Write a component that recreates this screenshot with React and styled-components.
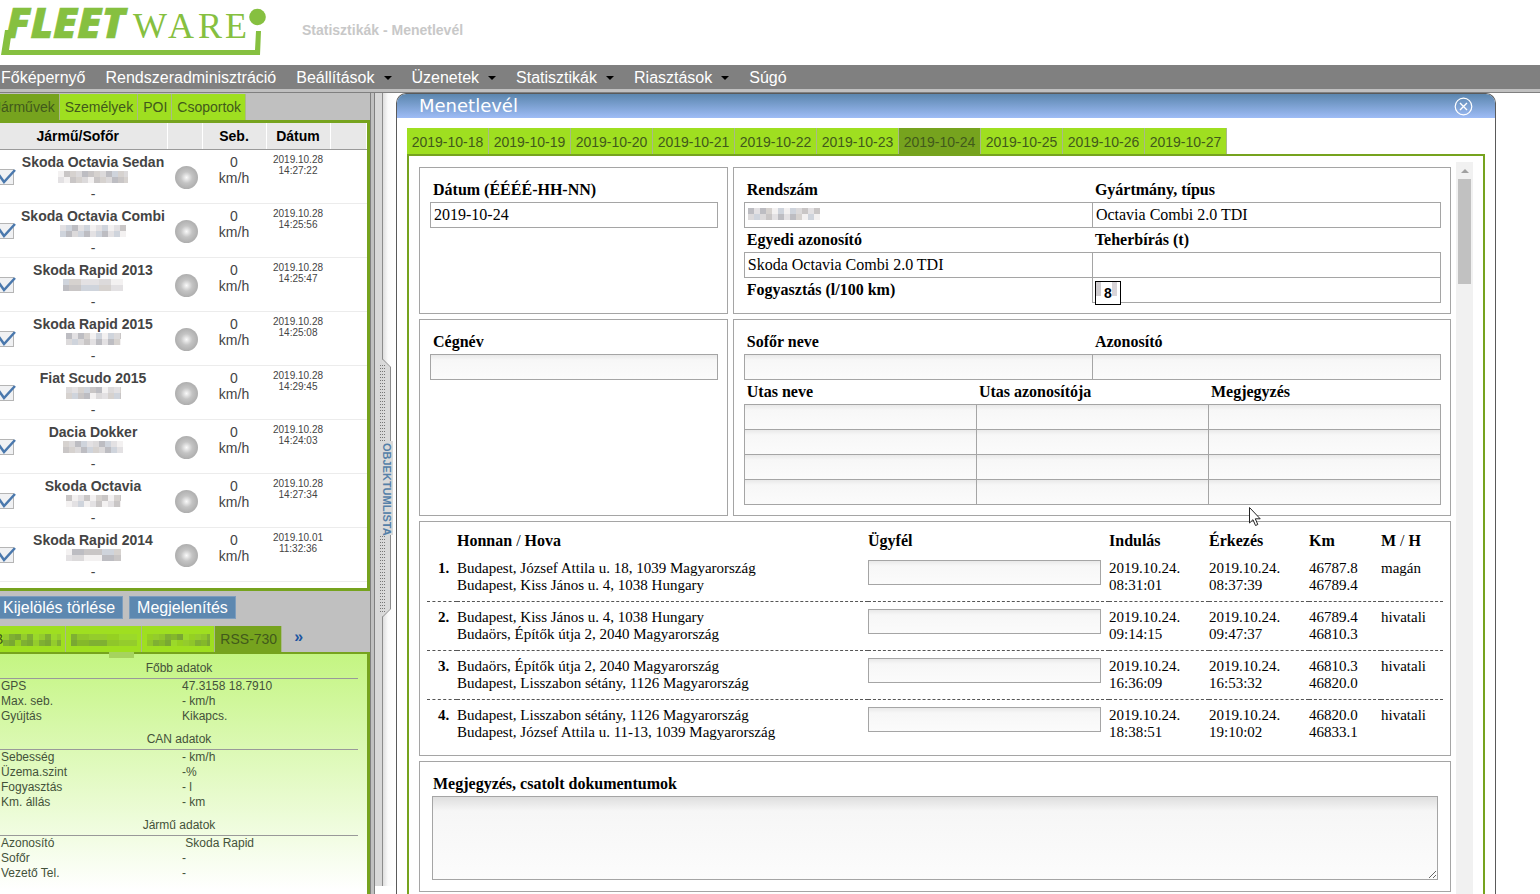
import { Fragment } from "react";
import styled, { createGlobalStyle, css } from "styled-components";

const GlobalStyle = createGlobalStyle`
  * {
    box-sizing: border-box;
  }

  body {
    margin: 0;
    background: #fff;
    font-family: "Liberation Sans", Arial, sans-serif;
  }

  button,
  input,
  textarea {
    font: inherit;
    margin: 0;
  }
`;

const GREEN = "#76a31e";
const LIME = "#9fdf20";
const LINE = "#a5a5a5";

const Page = styled.div`
  display: flex;
  flex-direction: column;
  height: 100vh;
  overflow: hidden;
`;

const Header = styled.header`
  display: flex;
  align-items: center;
  flex: none;
  height: 65px;
  gap: 34px;

  svg {
    align-self: flex-start;
  }
`;

const Breadcrumb = styled.div`
  color: #c8c8c8;
  font-size: 14px;
  font-weight: bold;
  padding-bottom: 6px;
`;

const MenuBar = styled.nav`
  display: flex;
  align-items: center;
  flex: none;
  gap: 20px;
  height: 24px;
  padding: 1px 0 0 1px;
  background: #808080;
`;

const MenuLink = styled.a`
  display: flex;
  align-items: center;
  gap: 9px;
  color: #fff;
  font-size: 16px;
  line-height: 23px;
  text-decoration: none;
`;

const Caret = styled.span`
  border: 4px solid transparent;
  border-top-color: #000;
  border-bottom: 0;
`;

const Strip = styled.div`
  flex: none;
  height: 4px;
  background: #c0c0c0;
  border-bottom: 1px solid #808080;
`;

const Body = styled.div`
  display: flex;
  flex: 1;
  min-height: 0;
`;

/* the panel is slid a little under the left edge */
const Side = styled.aside`
  display: flex;
  flex-direction: column;
  flex: none;
  width: 382px;
  margin-left: -11px;
  background: #c0c0c0;
  border-right: 1px solid #808080;
`;

const Tabs = styled.div`
  display: flex;
  flex: none;
  margin-top: ${(p) => p.$top || 0}px;
`;

const Tab = styled.button`
  height: 26px;
  padding: 0 4px 0 5px;
  border: 0;
  border-right: 1px solid #a9b98a;
  background: ${(p) => (p.$active ? GREEN : LIME)};
  color: #41591b;
  font-size: 14px;
  line-height: 26px;
  white-space: nowrap;

  svg {
    vertical-align: middle;
  }
`;

const DayTab = styled(Tab)`
  width: 82px;
  padding: 0;
  line-height: 28px;
`;

const MoreTabs = styled.button`
  border: 0;
  padding: 0 0 4px 12px;
  background: none;
  color: #1c55a0;
  font-size: 16px;
  font-weight: bold;
  line-height: 20px;
`;

const ListBox = styled.div`
  flex: none;
  height: 471px;
  overflow: hidden;
  background: #fff;
  border: 3px solid ${GREEN};
  border-left: 0;
`;

const VehicleTable = styled.table`
  width: 100%;
  table-layout: fixed;
  border-collapse: collapse;
  color: #444;
  font-size: 14px;
  line-height: 16px;
  text-align: center;

  th {
    height: 26px;
    padding: 0;
    background: #e8e8e8;
    border-right: 1px solid #fff;
    border-bottom: 1px solid #9a9a9a;
    color: #000;
  }

  td {
    height: 54px;
    padding: 4px 0 0;
    vertical-align: top;
    border-bottom: 1px solid #ececec;
  }
`;

const VehicleName = styled.div`
  font-weight: bold;
  white-space: nowrap;
`;

const Stamp = styled.td`
  font-size: 10px;
  line-height: 11px;
`;

const CheckLabel = styled.label`
  position: relative;
  display: block;
  width: 18px;
  height: 18px;
  margin: 14px 0 0 7px;

  input {
    appearance: none;
    width: 17px;
    height: 16px;
    margin: 1px 0 0;
    border: 1px solid #b5b5b5;
    background: #f0f1f3;
  }

  svg {
    position: absolute;
    left: 0;
    top: 0;
  }
`;

const Lamp = styled.span`
  display: block;
  width: 23px;
  height: 23px;
  margin: 12px 4px 0 auto;
  border-radius: 50%;
  background: radial-gradient(circle, #fafafa 0%, #c4c4c4 35%, #9c9c9c 100%);
`;

const Actions = styled.div`
  display: flex;
  flex: none;
  gap: 6px;
  padding: 5px 0 7px 6px;
`;

const ActionButton = styled.button`
  height: 23px;
  padding: 0 7px;
  border: 1px solid #7d9dbd;
  background: #5d88b0;
  color: #fff;
  font-size: 16px;
  line-height: 20px;
`;

const Details = styled.div`
  position: relative;
  flex: 1;
  padding: 0 9px 0 11px;
  background: linear-gradient(#c4f582, #fff 236px);
  border-top: 2px solid ${GREEN};
  border-right: 3px solid ${GREEN};
`;

const Smudge = styled.span`
  position: absolute;
  left: 120px;
  top: -2px;
  width: 25px;
  height: 6px;
  background: #a6d35e;
`;

const DetailTable = styled.table`
  width: 100%;
  border-collapse: collapse;
  color: #44523a;
  font-size: 12px;
  line-height: 15px;

  & + & {
    margin-top: 1px;
  }

  caption {
    padding: 7px 0 2px;
    border-bottom: 1px solid #999;
  }

  th {
    width: 182px;
    padding: 0 0 0 1px;
    font-weight: normal;
    text-align: left;
  }

  td {
    padding: 0;
    white-space: pre;
  }
`;

const Splitter = styled.div`
  position: relative;
  flex: none;
  width: 25px;
  background: linear-gradient(
    to right,
    #c0c0c0 3px,
    #808080 3px 4px,
    #d8d8d8 4px 11px,
    #8c8c8c 11px 12px,
    #dedede 12px,
    #fafafa 17px,
    #fff
  );

  &::after {
    content: "";
    position: absolute;
    left: 4px;
    right: 0;
    bottom: 0;
    height: 8px;
    background: #fff;
  }
`;

const SplitHandle = styled.button`
  position: absolute;
  left: 5px;
  top: 266px;
  width: 18px;
  height: 260px;
  padding: 0;
  border: 0;
  background: none;

  svg {
    position: absolute;
    left: 0;
    top: 0;
  }
`;

const SplitText = styled.span`
  position: absolute;
  left: 5px;
  top: 84px;
  color: #5580a8;
  font-size: 11px;
  font-weight: bold;
  line-height: 11px;
  writing-mode: vertical-rl;
`;

const Win = styled.main`
  display: flex;
  flex-direction: column;
  flex: 1;
  min-width: 0;
  margin-right: 44px;
  border: 1px solid #5a5a5a;
  border-bottom: 0;
  border-radius: 10px 10px 0 0;
  overflow: hidden;
`;

const WinTitle = styled.div`
  display: flex;
  align-items: center;
  justify-content: space-between;
  flex: none;
  height: 24px;
  padding: 0 22px;
  background: linear-gradient(#5b86ae, #9ebcf6);

  h1 {
    margin: 0;
    color: #fff;
    font-family: "DejaVu Sans", Verdana, sans-serif;
    font-size: 18px;
    font-weight: normal;
    line-height: 24px;
  }

  button {
    display: flex;
    padding: 0;
    border: 0;
    background: none;
  }
`;

const WinBody = styled.div`
  display: flex;
  flex-direction: column;
  flex: 1;
  min-height: 0;
  padding: 10px 10px 0;
`;

const Sheet = styled.div`
  display: flex;
  flex: 1;
  min-height: 0;
  gap: 5px;
  padding: 6px 10px 0;
  border: 2px solid ${GREEN};
  border-bottom: 0;
`;

const Form = styled.form`
  display: grid;
  grid-template-columns: 43fr 100fr;
  grid-auto-rows: max-content;
  flex: 1;
  gap: 5px;
  min-width: 0;
  padding-top: 5px;
  font-family: "Liberation Serif", "Times New Roman", serif;
  font-size: 16px;
`;

const Card = styled.section`
  grid-column: ${(p) => (p.$wide ? "1 / -1" : "auto")};
  padding: ${(p) => (p.$flush ? "7px" : "9px 10px 11px")};
  border: 1px solid ${LINE};
`;

const Fields = styled.div`
  display: grid;
  grid-template-columns: repeat(${(p) => p.$cols}, 1fr);
  grid-auto-rows: 25px;
`;

const FieldLabel = styled.label`
  display: block;
  padding-left: 3px;
  font-weight: bold;
  line-height: 25px;
`;

const boxLook = css`
  border: 1px solid ${LINE};
  border-radius: 0;
  outline: 0;
  background: ${(p) =>
    p.readOnly ? "#fff" : "linear-gradient(#e9e9e9, #f7f7f7 5px, #fbfbfb)"};
`;

/* one pixel larger than its cell, so that neighbours share a border */
const Field = styled.input`
  ${boxLook}
  width: calc(100% + 1px);
  height: 26px;
  padding: 0 3px;
`;

const FieldWrap = styled.div`
  position: relative;
`;

const FieldMosaic = styled.span`
  position: absolute;
  left: 4px;
  top: 6px;
  line-height: 0;
`;

const Usage = styled.b`
  position: absolute;
  left: 3px;
  top: 4px;
  width: 26px;
  height: 24px;
  padding-left: 8px;
  border: 1px solid #000;
  background: linear-gradient(to right, #d0cdd0 5px, #fff 5px 16px, #d8d4d8 16px 21px, #fff 21px);
  background-size: 100% 14px;
  background-repeat: no-repeat;
  background-color: #fff;
  font-family: "Liberation Sans", Arial, sans-serif;
  font-size: 14px;
  line-height: 22px;
`;

const Trips = styled.table`
  width: 100%;
  table-layout: fixed;
  border-collapse: collapse;
  font-size: 15px;
  line-height: 17px;
  text-align: left;

  thead th {
    height: 23px;
    padding: 0;
    font-size: 16px;
  }

  tbody th,
  td {
    height: 49px;
    padding: 8px 0 6px;
    vertical-align: top;
  }

  tbody th {
    padding-left: 11px;
  }

  tbody tr + tr {
    border-top: 1px dashed #555;
  }

  tbody tr + tr > * {
    padding-top: 7px;
  }
`;

const Slash = styled.span`
  font-weight: normal;
`;

const ClientField = styled.input`
  ${boxLook}
  display: block;
  width: 233px;
  height: 25px;
`;

const Notes = styled.textarea`
  ${boxLook}
  display: block;
  width: calc(100% - 4px);
  height: 84px;
  margin: 0 2px;
  background: linear-gradient(#dedede, #f6f6f6 14px, #fcfcfc);
  resize: vertical;
`;

const ScrollTrack = styled.div`
  flex: none;
  width: 17px;
  padding: 0 2px;
  background: #f1f1f1;
`;

const ScrollArrow = styled.div`
  display: flex;
  align-items: center;
  justify-content: center;
  height: 17px;

  &::before {
    content: "";
    border: 4px solid transparent;
    border-top: 0;
    border-bottom-color: #a0a0a0;
  }
`;

const ScrollThumb = styled.div`
  height: 105px;
  background: #c1c1c1;
`;

const Pointer = styled.svg`
  position: absolute;
  left: 1249px;
  top: 507px;
  pointer-events: none;
`;

const GREYS = ["#c9c6c6", "#e3e1e3", "#bdbdc2", "#d6d2cf", "#f3f1f1", "#cfd4dc", "#dcdadb"];
const GREENS = ["#84b82a", "#94cc2c", "#79a832", "#8fc62a", "#9bd92a", "#7fb032", "#95d022"];

function Mosaic({ width = 60, seed = 1, green }) {
  const shades = green ? GREENS : GREYS;
  const cells = [];
  for (let x = 0; x < width; x += 6) {
    for (let y = 0; y < 12; y += 6) {
      const n = (x * 5 + y * 3 + seed * 11 + ((x * seed) % 5)) % shades.length;
      cells.push(<rect key={`${x}-${y}`} x={x} y={y} width="6" height="6" fill={shades[n]} />);
    }
  }
  return (
    <svg width={width} height="12" aria-hidden="true">
      {cells}
    </svg>
  );
}

function Logo() {
  return (
    <svg width="268" height="60" role="img" aria-label="Fleetware" fill="#86c040">
      <text
        x="6"
        y="38"
        fontFamily="Open Sans, sans-serif"
        fontSize="43"
        fontWeight="800"
        fontStyle="italic"
        stroke="#86c040"
        strokeWidth="0.600"
      >
        FLEET
      </text>
      <text x="133 168 198 225" y="38" fontFamily="Liberation Serif, serif" fontSize="36">
        WARE
      </text>
      <path d="M5 30 L1 55 H260 L261 31 H256 L255 50 H9 L12 30 Z" />
      <circle cx="257.500" cy="17" r="8.300" />
    </svg>
  );
}

const menu = [
  ["Főképernyő"],
  ["Rendszeradminisztráció"],
  ["Beállítások", true],
  ["Üzenetek", true],
  ["Statisztikák", true],
  ["Riasztások", true],
  ["Súgó"],
];

const vehicles = [
  ["Skoda Octavia Sedan", "2019.10.28", "14:27:22", 70],
  ["Skoda Octavia Combi", "2019.10.28", "14:25:56", 66],
  ["Skoda Rapid 2013", "2019.10.28", "14:25:47", 60],
  ["Skoda Rapid 2015", "2019.10.28", "14:25:08", 55],
  ["Fiat Scudo 2015", "2019.10.28", "14:29:45", 55],
  ["Dacia Dokker", "2019.10.28", "14:24:03", 60],
  ["Skoda Octavia", "2019.10.28", "14:27:34", 55],
  ["Skoda Rapid 2014", "2019.10.01", "11:32:36", 55],
];

const details = [
  ["Főbb adatok", [["GPS", "47.3158 18.7910"], ["Max. seb.", "- km/h"], ["Gyújtás", "Kikapcs."]]],
  ["CAN adatok", [["Sebesség", "- km/h"], ["Üzema.szint", "-%"], ["Fogyasztás", "- l"], ["Km. állás", "- km"]]],
  ["Jármű adatok", [["Azonosító", " Skoda Rapid"], ["Sofőr", "-"], ["Vezető Tel.", "-"]]],
];

const days = [18, 19, 20, 21, 22, 23, 24, 25, 26, 27];

const trips = [
  {
    from: "Budapest, József Attila u. 18, 1039 Magyarország",
    to: "Budapest, Kiss János u. 4, 1038 Hungary",
    start: "08:31:01",
    end: "08:37:39",
    km: ["46787.8", "46789.4"],
    kind: "magán",
  },
  {
    from: "Budapest, Kiss János u. 4, 1038 Hungary",
    to: "Budaörs, Építők útja 2, 2040 Magyarország",
    start: "09:14:15",
    end: "09:47:37",
    km: ["46789.4", "46810.3"],
    kind: "hivatali",
  },
  {
    from: "Budaörs, Építők útja 2, 2040 Magyarország",
    to: "Budapest, Lisszabon sétány, 1126 Magyarország",
    start: "16:36:09",
    end: "16:53:32",
    km: ["46810.3", "46820.0"],
    kind: "hivatali",
  },
  {
    from: "Budapest, Lisszabon sétány, 1126 Magyarország",
    to: "Budapest, József Attila u. 11-13, 1039 Magyarország",
    start: "18:38:51",
    end: "19:10:02",
    km: ["46820.0", "46833.1"],
    kind: "hivatali",
  },
];

function VehicleList() {
  return (
    <ListBox>
      <VehicleTable>
        <colgroup>
          <col width="30" />
          <col width="148" />
          <col width="35" />
          <col width="64" />
          <col width="64" />
          <col />
        </colgroup>
        <thead>
          <tr>
            <th colSpan={2}>Jármű/Sofőr</th>
            <th />
            <th>Seb.</th>
            <th>Dátum</th>
            <th />
          </tr>
        </thead>
        <tbody>
          {vehicles.map(([name, date, time, width], i) => (
            <tr key={name}>
              <td>
                <CheckLabel>
                  <input type="checkbox" defaultChecked aria-label={name} />
                  <svg width="22" height="18" viewBox="0 0 22 18">
                    <path d="M3 7 L8 14 L19 2" fill="none" stroke="#4a78ad" strokeWidth="2.500" />
                  </svg>
                </CheckLabel>
              </td>
              <td>
                <VehicleName>{name}</VehicleName>
                <Mosaic width={width} seed={i + 1} />
                <div>-</div>
              </td>
              <td>
                <Lamp />
              </td>
              <td>
                0<br />
                km/h
              </td>
              <Stamp>
                {date}
                <br />
                {time}
              </Stamp>
              <td />
            </tr>
          ))}
        </tbody>
      </VehicleTable>
    </ListBox>
  );
}

function Sidebar() {
  return (
    <Side>
      <Tabs $top={1}>
        <Tab $active>Járművek</Tab>
        <Tab>Személyek</Tab>
        <Tab>POI</Tab>
        <Tab>Csoportok</Tab>
      </Tabs>
      <VehicleList />
      <Actions>
        <ActionButton>Kijelölés törlése</ActionButton>
        <ActionButton>Megjelenítés</ActionButton>
      </Actions>
      <Tabs>
        <Tab>
          B<Mosaic width={58} seed={2} green />
        </Tab>
        <Tab aria-label="2">
          <Mosaic width={66} seed={3} green />
        </Tab>
        <Tab aria-label="3">
          <Mosaic width={63} seed={5} green />
        </Tab>
        <Tab $active>RSS-730</Tab>
        <MoreTabs>»</MoreTabs>
      </Tabs>
      <Details>
        <Smudge />
        {details.map(([title, rows]) => (
          <DetailTable key={title}>
            <caption>{title}</caption>
            <tbody>
              {rows.map(([label, value]) => (
                <tr key={label}>
                  <th scope="row">{label}</th>
                  <td>{value}</td>
                </tr>
              ))}
            </tbody>
          </DetailTable>
        ))}
      </Details>
    </Side>
  );
}

function SplitBar() {
  return (
    <Splitter>
      <SplitHandle>
        <svg width="18" height="260">
          <defs>
            <pattern id="dots" width="2" height="3" patternUnits="userSpaceOnUse">
              <rect width="1" height="1" fill="#777" />
            </pattern>
          </defs>
          <path d="M6 0 L14 8 V250 L6 258 Z" fill="#dadada" />
          <path d="M6.500 0 L14.500 8 V250 L6.500 258" fill="none" stroke="#8c8c8c" />
          <rect x="4" y="6" width="6" height="76" fill="url(#dots)" />
          <rect x="4" y="177" width="6" height="76" fill="url(#dots)" />
          <rect x="5" y="82" width="12" height="94" fill="#dadada" />
        </svg>
        <SplitText>OBJEKTUMLISTA</SplitText>
      </SplitHandle>
    </Splitter>
  );
}

function TripTable() {
  return (
    <Trips>
      <colgroup>
        <col width="30" />
        <col />
        <col width="241" />
        <col width="100" />
        <col width="100" />
        <col width="72" />
        <col width="62" />
      </colgroup>
      <thead>
        <tr>
          <th />
          <th>
            Honnan <Slash>/</Slash> Hova
          </th>
          <th>Ügyfél</th>
          <th>Indulás</th>
          <th>Érkezés</th>
          <th>Km</th>
          <th>
            M <Slash>/</Slash> H
          </th>
        </tr>
      </thead>
      <tbody>
        {trips.map((trip, i) => (
          <tr key={trip.start}>
            <th scope="row">{i + 1}.</th>
            <td>
              {trip.from}
              <br />
              {trip.to}
            </td>
            <td>
              <ClientField aria-label={`Ügyfél ${i + 1}`} />
            </td>
            {[trip.start, trip.end].map((time) => (
              <td key={time}>
                2019.10.24.
                <br />
                {time}
              </td>
            ))}
            <td>
              {trip.km[0]}
              <br />
              {trip.km[1]}
            </td>
            <td>{trip.kind}</td>
          </tr>
        ))}
      </tbody>
    </Trips>
  );
}

function TripForm() {
  return (
    <Form>
      <Card>
        <FieldLabel htmlFor="date">Dátum (ÉÉÉÉ-HH-NN)</FieldLabel>
        <Field id="date" readOnly defaultValue="2019-10-24" />
      </Card>
      <Card>
        <Fields $cols={2}>
          <FieldLabel htmlFor="plate">Rendszám</FieldLabel>
          <FieldLabel htmlFor="make">Gyártmány, típus</FieldLabel>
          <FieldWrap>
            <Field id="plate" readOnly />
            <FieldMosaic>
              <Mosaic width={72} seed={4} />
            </FieldMosaic>
          </FieldWrap>
          <Field id="make" readOnly defaultValue="Octavia Combi 2.0 TDI" />
          <FieldLabel htmlFor="uid">Egyedi azonosító</FieldLabel>
          <FieldLabel htmlFor="load">Teherbírás (t)</FieldLabel>
          <Field id="uid" readOnly defaultValue="Skoda Octavia Combi 2.0 TDI" />
          <Field id="load" readOnly />
          <FieldLabel htmlFor="usage">Fogyasztás (l/100 km)</FieldLabel>
          <FieldWrap>
            <Field id="usage" readOnly />
            <Usage>8</Usage>
          </FieldWrap>
        </Fields>
      </Card>
      <Card>
        <FieldLabel htmlFor="company">Cégnév</FieldLabel>
        <Field id="company" />
      </Card>
      <Card>
        <Fields $cols={2}>
          <FieldLabel htmlFor="driver">Sofőr neve</FieldLabel>
          <FieldLabel htmlFor="driver-id">Azonosító</FieldLabel>
          <Field id="driver" />
          <Field id="driver-id" />
        </Fields>
        <Fields $cols={3}>
          <FieldLabel htmlFor="name-1">Utas neve</FieldLabel>
          <FieldLabel htmlFor="pid-1">Utas azonosítója</FieldLabel>
          <FieldLabel htmlFor="note-1">Megjegyzés</FieldLabel>
          {[1, 2, 3, 4].map((n) => (
            <Fragment key={n}>
              <Field id={`name-${n}`} aria-label="Utas neve" />
              <Field id={`pid-${n}`} aria-label="Utas azonosítója" />
              <Field id={`note-${n}`} aria-label="Megjegyzés" />
            </Fragment>
          ))}
        </Fields>
      </Card>
      <Card $wide $flush>
        <TripTable />
      </Card>
      <Card $wide>
        <FieldLabel htmlFor="notes">Megjegyzés, csatolt dokumentumok</FieldLabel>
        <Notes id="notes" />
      </Card>
    </Form>
  );
}

function App() {
  return (
    <Page>
      <GlobalStyle />
      <Header>
        <Logo />
        <Breadcrumb>Statisztikák - Menetlevél</Breadcrumb>
      </Header>
      <MenuBar>
        {menu.map(([label, hasMenu]) => (
          <MenuLink key={label} href="#">
            {label}
            {hasMenu && <Caret />}
          </MenuLink>
        ))}
      </MenuBar>
      <Strip />
      <Body>
        <Sidebar />
        <SplitBar />
        <Win>
          <WinTitle>
            <h1>Menetlevél</h1>
            <button aria-label="Bezárás">
              <svg width="19" height="19" fill="none" stroke="#fff">
                <circle cx="9.500" cy="9.500" r="8.300" strokeWidth="1.200" />
                <path d="M6 6 L13 13 M13 6 L6 13" strokeWidth="1.400" />
              </svg>
            </button>
          </WinTitle>
          <WinBody>
            <Tabs>
              {days.map((day) => (
                <DayTab key={day} $active={day === 24}>
                  2019-10-{day}
                </DayTab>
              ))}
            </Tabs>
            <Sheet>
              <TripForm />
              <ScrollTrack>
                <ScrollArrow />
                <ScrollThumb />
              </ScrollTrack>
            </Sheet>
          </WinBody>
        </Win>
      </Body>
      <Pointer width="12" height="20" viewBox="0 0 12 20">
        <path d="M0.500 0.500 V16 L4 12.700 L6.500 18.500 L8.800 17.500 L6.300 11.800 H11.200 Z" fill="#fff" stroke="#222" />
      </Pointer>
    </Page>
  );
}

export default App;
